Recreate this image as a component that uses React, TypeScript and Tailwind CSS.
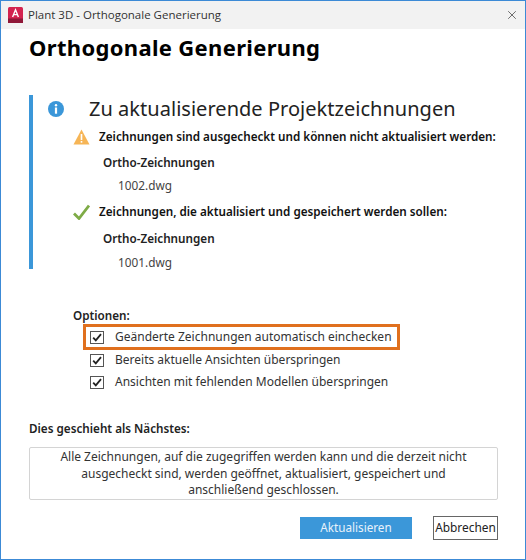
import { X } from "lucide-react";

function CheckRow({ label, boxed }: { label: string; boxed?: boolean }) {
    return (
        <div className={boxed ? "flex items-center h-[26px] w-[317px] -mb-[1px] border-[3px] border-[#e0701e] pl-[4px]" : "flex items-center h-[22px] pl-[7px]"}>
            <span className="flex items-center justify-center w-[14px] h-[13px] border border-[#555] bg-white">
                <svg width="12" height="11" viewBox="0 0 12 11" fill="none">
                    <path d="M2.2 5.6 L4.8 8.4 L10 2.2" stroke="#222" strokeWidth="1.8" />
                </svg>
            </span>
            <span className="ml-[11px] text-[12px] text-[#333] whitespace-nowrap">{label}</span>
        </div>
    );
}

function FileGroup({ file, nameClass, fileClass }: { file: string; nameClass: string; fileClass: string }) {
    return (
        <div className="pl-[70px]">
            <div className={`h-[22px] text-[11.7px] leading-[22px] font-semibold text-[#222] ${nameClass}`}>Ortho-Zeichnungen</div>
            <div className={`h-[22px] pl-[15px] text-[11.8px] leading-[22px] text-[#444] ${fileClass}`}>{file}</div>
        </div>
    );
}

export default function App() {
    return (
        <div className="w-[526px] h-[560px] flex flex-col border border-[#3c8ad6] bg-white font-['Noto_Sans',sans-serif] overflow-hidden">
            {/* Title bar */}
            <div className="h-[28px] shrink-0 flex items-center bg-[#f2f2f2] pl-[7px] pr-[6px]">
                <svg width="15" height="16" viewBox="0 0 15 16">
                    <rect width="15" height="16" rx="1.5" fill="#d3234f" />
                    <rect y="11.5" width="15" height="4.5" fill="#8f1838" />
                    <path d="M4.6 10 L7.5 2.8 L10.4 10 M5.7 7.6 H9.3" stroke="#fff" strokeWidth="1.4" fill="none" />
                </svg>
                <span className="ml-[5px] text-[11.5px] text-[#333] font-['Open_Sans',sans-serif]">Plant 3D - Orthogonale Generierung</span>
                <X className="ml-auto w-[14px] h-[14px] text-[#333]" strokeWidth={1.2} />
            </div>

            <div className="flex-1 flex flex-col pl-[28px] pr-[27px]">
                <h1 className="h-[36px] text-[22px] leading-[36px] font-bold text-black tracking-[0.33px]">Orthogonale Generierung</h1>

                {/* Info panel */}
                <div className="mt-[30px] h-[174px] border-l-4 border-[#3b97d9]">
                    <div className="flex items-center h-[28px]">
                        <svg className="ml-[15px] shrink-0" width="16" height="16" viewBox="0 0 16 16">
                            <circle cx="8" cy="8" r="8" fill="#3b97d9" />
                            <rect x="6.8" y="3" width="2.4" height="2.4" rx="1.2" fill="#fff" />
                            <rect x="6.9" y="6.5" width="2.2" height="6.2" fill="#fff" />
                        </svg>
                        <span className="ml-[25px] text-[20px] text-[#222] tracking-[0.03px] whitespace-nowrap">Zu aktualisierende Projektzeichnungen</span>
                    </div>
                    <div className="flex items-center h-[22px] mt-[3px] pl-[40px]">
                        <svg className="shrink-0" width="17" height="16" viewBox="0 0 17 16">
                            <path d="M8.5 0.5 L16.5 15.5 H0.5 Z" fill="#f6b556" />
                            <rect x="7.7" y="5" width="1.6" height="6" fill="#fff" />
                            <rect x="7.7" y="12" width="1.6" height="1.7" fill="#fff" />
                        </svg>
                        <span className="ml-[9px] text-[11.7px] font-semibold text-[#111] whitespace-nowrap">Zeichnungen sind ausgecheckt und können nicht aktualisiert werden:</span>
                    </div>
                    <FileGroup file="1002.dwg" nameClass="mt-[3px]" fileClass="mt-[1px]" />
                    <div className="flex items-center h-[22px] mt-[5px] pl-[40px]">
                        <svg className="shrink-0" width="17" height="16" viewBox="0 0 17 16" fill="none">
                            <path d="M1 9.5 L6 14.5 L16 1.5" stroke="#7eab46" strokeWidth="2.8" />
                        </svg>
                        <span className="ml-[9px] text-[11.7px] font-semibold text-[#111] whitespace-nowrap">Zeichnungen, die aktualisiert und gespeichert werden sollen:</span>
                    </div>
                    <FileGroup file="1001.dwg" nameClass="mt-[4px]" fileClass="mt-[2px]" />
                </div>

                {/* Options */}
                <div className="mt-[36px] pl-[44px]">
                    <div className="h-[20px] text-[11.7px] leading-[20px] font-semibold text-[#222]">Optionen:</div>
                    <div className="-mt-[1px] ml-[10px]">
                        <CheckRow boxed label="Geänderte Zeichnungen automatisch einchecken" />
                        <CheckRow label="Bereits aktuelle Ansichten überspringen" />
                        <CheckRow label="Ansichten mit fehlenden Modellen überspringen" />
                    </div>
                </div>

                {/* Next steps */}
                <div className="mt-[25px] h-[20px] text-[11.7px] leading-[20px] font-semibold text-[#222]">Dies geschieht als Nächstes:</div>
                <div className="mt-[9px] w-[469px] h-[53px] border border-[#d4d4d4] rounded-[2px] text-center text-[12px] leading-[16.5px] text-[#333] pt-[1px]">
                    Alle Zeichnungen, auf die zugegriffen werden kann und die derzeit nicht
                    <br />
                    ausgecheckt sind, werden geöffnet, aktualisiert, gespeichert und
                    <br />
                    anschließend geschlossen.
                </div>

                {/* Buttons */}
                <div className="mt-[16px] flex items-center justify-end">
                    <button className="w-[112px] h-[22px] bg-[#3b97d9] text-[11.7px] text-[#e8f2fb]">Aktualisieren</button>
                    <button className="ml-[21px] w-[65px] h-[24px] border border-[#666] text-[11.9px] text-[#222]">Abbrechen</button>
                </div>
            </div>
        </div>
    );
}
